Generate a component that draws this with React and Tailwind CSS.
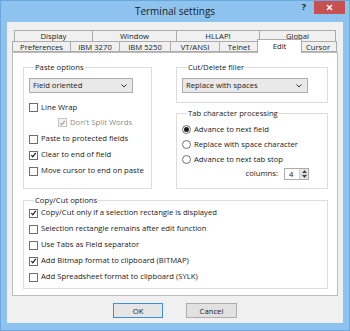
import React from "react";

const font = { fontFamily: '"Open Sans", "Noto Sans", sans-serif' };

function CheckMark({ color = "#222" }) {
  return (
    <svg width="8" height="8" viewBox="0 0 8 8" className="block">
      <path d="M1.5 4.2 L3.2 6 L6.6 1.6" fill="none" stroke={color} strokeWidth="1.4" />
    </svg>
  );
}

function Check({ label, checked, disabled, className = "" }) {
  return (
    <div className={`flex items-center ${className}`}>
      <span
        className={`w-[9px] h-[9px] border flex items-center justify-center ${
          disabled ? "border-[#c4c4c4] bg-[#f4f4f4]" : "border-[#6f6f6f] bg-white"
        }`}
      >
        {checked && <CheckMark color={disabled ? "#a0a0a0" : "#222"} />}
      </span>
      <span className={`ml-[3px] ${disabled ? "text-[#8d8d8d]" : "text-[#1a1a1a]"}`}>{label}</span>
    </div>
  );
}

function Radio({ label, checked }) {
  return (
    <div className="flex items-center h-[15px]">
      <span className="w-[9px] h-[9px] rounded-full border border-[#6f6f6f] bg-white flex items-center justify-center">
        {checked && <span className="w-[5px] h-[5px] rounded-full bg-[#1a1a1a]" />}
      </span>
      <span className="ml-[3px]">{label}</span>
    </div>
  );
}

function Combo({ value, width }) {
  return (
    <div
      className={`${width} h-[15px] border border-[#acacac] bg-[#e9e9e9] flex items-center justify-between pl-[3px] pr-[5px]`}
    >
      <span>{value}</span>
      <svg width="6" height="4" viewBox="0 0 6 4">
        <path d="M0.5 0.5 L3 3 L5.5 0.5" fill="none" stroke="#333" strokeWidth="1" />
      </svg>
    </div>
  );
}

function Group({ title, className = "", children }) {
  return (
    <div className={`border border-[#dcdcdc] ${className}`}>
      <div className="-mt-[6px] ml-[5px] w-fit px-[1px] bg-white leading-[11px] h-[11px]">{title}</div>
      {children}
    </div>
  );
}

function Tab({ label, width, selected }) {
  if (selected) {
    return (
      <div
        className={`${width} h-[14px] -mt-[2px] -mb-[1px] -mx-[2px] relative z-10 bg-white border border-b-0 border-[#acacac] flex justify-center pt-[1px] leading-[10px]`}
      >
        {label}
      </div>
    );
  }
  return (
    <div
      className={`${width} h-full bg-[#f0f0f0] border border-[#acacac] -ml-[1px] first:ml-0 flex items-center justify-center leading-[10px]`}
    >
      {label}
    </div>
  );
}

export default function App() {
  return (
    <div
      style={font}
      className="w-[350px] h-[331px] bg-[#8ec3f0] border border-[#6aa7dd] flex flex-col text-[7.7px] text-[#1a1a1a] overflow-hidden"
    >
      {/* title bar */}
      <div className="h-[21px] flex items-start relative">
        <div className="flex-1 flex justify-center pt-[4px] text-[10px] text-[#1a1a1a] leading-[12px]">
          Terminal settings
        </div>
        <div className="absolute right-[4px] top-[-1px] flex items-start">
          <span className="text-[9px] font-bold mr-[8px] mt-[2px] leading-[10px]">?</span>
          <div className="w-[31px] h-[14px] bg-[#c75050] flex items-center justify-center">
            <svg width="7" height="7" viewBox="0 0 7 7">
              <path d="M1 1 L6 6 M6 1 L1 6" stroke="white" strokeWidth="1.5" />
            </svg>
          </div>
        </div>
      </div>

      {/* client area */}
      <div className="mx-[6px] h-[301px] bg-[#f0f0f0] flex flex-col">
        {/* tabs */}
        <div className="mt-[8px] ml-[7px] w-[322px] h-[12px] flex">
          <Tab label="Display" width="w-[79px]" />
          <Tab label="Window" width="w-[85px]" />
          <Tab label="HLLAPI" width="w-[84px]" />
          <Tab label="Global" width="w-[77px]" />
        </div>
        <div className="ml-[5px] h-[11px] -mt-[1px] flex items-start">
          <Tab label="Preferences" width="w-[59px]" />
          <Tab label="IBM 3270" width="w-[50px]" />
          <Tab label="IBM 5250" width="w-[52px]" />
          <Tab label="VT/ANSI" width="w-[50px]" />
          <Tab label="Telnet" width="w-[40px]" />
          <Tab label="Edit" width="w-[45px]" selected />
          <Tab label="Cursor" width="w-[38px]" />
        </div>

        {/* panel */}
        <div className="ml-[5px] w-[326px] h-[244px] bg-white border border-[#bcbcbc] pl-[10px] pt-[14px]">
          <div className="flex">
            <Group title="Paste options" className="w-[129px] h-[122px] pl-[5px]">
              <div className="mt-[5px]">
                <Combo value="Field oriented" width="w-[104px]" />
              </div>
              <div className="mt-[7px]">
                <Check label="Line Wrap" className="h-[15px]" />
                <Check label="Don't Split Words" checked disabled className="h-[15px] pl-[29px]" />
                <Check label="Paste to protected fields" className="h-[16px] mt-[1px]" />
                <Check label="Clear to end of field" checked className="h-[16px]" />
                <Check label="Move cursor to end on paste" className="h-[16px]" />
              </div>
            </Group>

            <div className="ml-[24px] w-[152px] flex flex-col">
              <Group title="Cut/Delete filler" className="h-[36px] pl-[5px]">
                <div className="mt-[5px]">
                  <Combo value="Replace with spaces" width="w-[126px]" />
                </div>
              </Group>
              <Group title="Tab character processing" className="mt-[10px] h-[76px] pl-[5px]">
                <div className="mt-[3px]">
                  <Radio label="Advance to next field" checked />
                  <Radio label="Replace with space character" />
                  <Radio label="Advance to next tab stop" />
                  <div className="h-[14px] flex items-center justify-end pr-[18px]">
                    <span className="mr-[6px]">columns:</span>
                    <div className="w-[25px] h-[12px] border border-[#acacac] flex">
                      <span className="flex-1 pl-[4px] leading-[10px]">4</span>
                      <div className="w-[9px] flex flex-col border-l border-[#d0d0d0]">
                        <div className="flex-1 bg-[#e6e6e6] flex items-center justify-center border-b border-[#cfcfcf]">
                          <svg width="5" height="3" viewBox="0 0 5 3">
                            <path d="M0 3 L2.5 0 L5 3 Z" fill="#444" />
                          </svg>
                        </div>
                        <div className="flex-1 bg-[#e6e6e6] flex items-center justify-center">
                          <svg width="5" height="3" viewBox="0 0 5 3">
                            <path d="M0 0 L2.5 3 L5 0 Z" fill="#444" />
                          </svg>
                        </div>
                      </div>
                    </div>
                  </div>
                </div>
              </Group>
            </div>
          </div>

          <Group title="Copy/Cut options" className="mt-[11px] w-[305px] h-[89px] pl-[5px]">
            <div className="-mt-[1px]">
              <Check label="Copy/Cut only if a selection rectangle is displayed" checked className="h-[16px]" />
              <Check label="Selection rectangle remains after edit function" className="h-[16px]" />
              <Check label="Use Tabs as Field separator" className="h-[16px]" />
              <Check label="Add Bitmap format to clipboard (BITMAP)" checked className="h-[16px]" />
              <Check label="Add Spreadsheet format to clipboard (SYLK)" className="h-[16px]" />
            </div>
          </Group>
        </div>

        {/* buttons */}
        <div className="mt-[7px] flex justify-center gap-[23px]">
          <button className="w-[50px] h-[15px] border border-[#3c8fdc] bg-[#e5e5e5] leading-[12px]">OK</button>
          <button className="w-[51px] h-[15px] border border-[#adadad] bg-[#e1e1e1] leading-[12px]">Cancel</button>
        </div>
      </div>
    </div>
  );
}
